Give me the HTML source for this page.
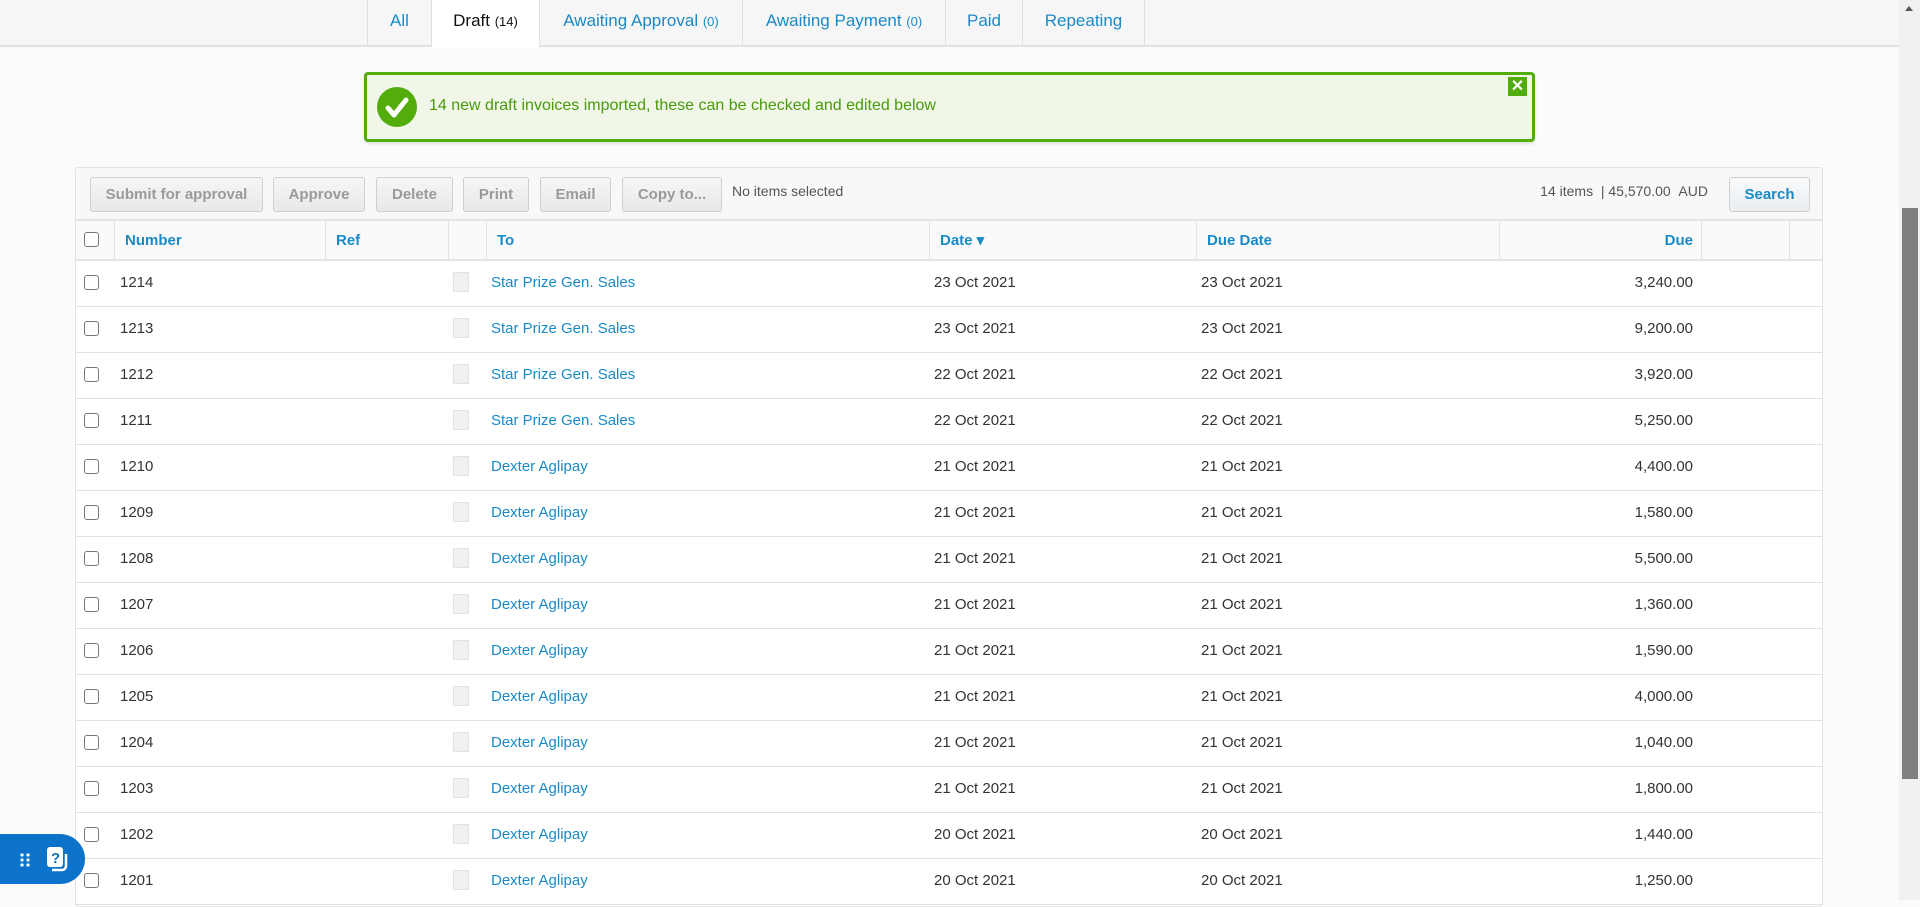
<!DOCTYPE html>
<html><head><meta charset="utf-8"><style>
*{box-sizing:border-box;margin:0;padding:0}
body{width:1920px;height:900px;overflow:hidden;background:#fbfbfb;font-family:"Liberation Sans",Arial,sans-serif;font-size:15px;color:#333;position:relative}
.top{position:absolute;left:0;top:0;width:1899px;height:47px;background:#f6f6f6;border-bottom:2px solid #e2e2e2}
.tab{position:absolute;top:0;height:46px;line-height:42px;text-align:center;color:#1a8ac7;font-size:17px;border-left:1px solid #e0e0e0}
.tab small{font-size:13px}
.tab.act{background:#fff;color:#111;height:47px}
.banner{position:absolute;left:364px;top:72px;width:1171px;height:70px;background:#f0f7e8;border:3px solid #52ad0a;border-radius:4px;box-shadow:0 2px 3px rgba(0,0,0,.1)}
.chk{position:absolute;left:10px;top:12px;width:40px;height:40px;border-radius:50%;background:#52ad0a}
.btxt{position:absolute;left:62px;top:22px;color:#4a9a0c;font-size:16px}
.x{position:absolute;right:5px;top:2px;width:19px;height:19px;background:#52ad0a;color:#fff;font-weight:bold;font-size:16px;line-height:19px;text-align:center}
.wrap{position:absolute;left:75px;top:167px;width:1748px;height:740px;background:#fff;border:1px solid #e2e2e2;border-radius:3px}
.tb{position:absolute;left:0;top:0;width:100%;height:53px;background:#f8f8f8;border-bottom:2px solid #e4e4e4}
.btn{position:absolute;top:9px;height:35px;line-height:33px;text-align:center;font-size:15px;font-weight:bold;color:#9a9a9a;background:linear-gradient(#f6f6f6,#e8e8e8);border:1px solid #cfcfcf;border-radius:3px}
.hdr{position:absolute;top:53px;left:0;width:100%;height:40px;background:#fafafa;border-bottom:2px solid #e4e4e4}
.hc{position:absolute;top:0;height:38px;line-height:40px;border-left:1px solid #e4e4e4;color:#1a8ac7;font-weight:bold;padding-left:10px}
.row{position:absolute;left:0;width:100%;height:46px;border-bottom:1px solid #e2e2e2;line-height:44px}
.row span{position:absolute;top:0}
.cb{position:absolute;width:15px;height:15px;border:1.5px solid #777;border-radius:3px;background:#fff}
.doc{position:absolute;top:11px;width:16px;height:20px;background:#f1f1f1;border:1px solid #e2e2e2}
a{color:#1a8ac7;text-decoration:none}
.sb{position:absolute;left:1899px;top:0;width:21px;height:900px;background:#f1f1f1}
.thumb{position:absolute;left:1902px;top:208px;width:16px;height:571px;background:#7f7f7f}
.help{position:absolute;left:0;top:834px;width:85px;height:50px;background:#0b73c9;border-radius:0 25px 25px 0}
</style></head><body>
<div class="top">
<div class="tab" style="left:367px;width:64px">All</div>
<div class="tab act" style="left:431px;width:108px">Draft <small>(14)</small></div>
<div class="tab" style="left:539px;width:203px">Awaiting Approval <small>(0)</small></div>
<div class="tab" style="left:742px;width:203px">Awaiting Payment <small>(0)</small></div>
<div class="tab" style="left:945px;width:77px">Paid</div>
<div class="tab" style="left:1022px;width:123px;border-right:1px solid #e0e0e0">Repeating</div>
</div>
<div class="banner"><div class="chk"><svg width="40" height="40" viewBox="0 0 40 40"><path d="M11 21l6 7 12-15" stroke="#fff" stroke-width="5" fill="none" stroke-linecap="round" stroke-linejoin="round"/></svg></div>
<div class="btxt">14 new draft invoices imported, these can be checked and edited below</div><div class="x">✕</div></div>
<div class="wrap">
<div class="tb">
<div class="btn" style="left:14px;width:173px">Submit for approval</div>
<div class="btn" style="left:197px;width:92px">Approve</div>
<div class="btn" style="left:300px;width:77px">Delete</div>
<div class="btn" style="left:387px;width:66px">Print</div>
<div class="btn" style="left:464px;width:71px">Email</div>
<div class="btn" style="left:546px;width:100px">Copy to...</div>
<div style="position:absolute;left:656px;top:15px;font-size:14px;color:#555">No items selected</div>
<div style="position:absolute;right:114px;top:15px;font-size:14px;color:#555">14 items &nbsp;| 45,570.00 &nbsp;AUD</div>
<div class="btn" style="left:1653px;width:81px;color:#1a8ac7;background:linear-gradient(#f9fafb,#e9eef2)">Search</div>
</div>
<div class="hdr">
<div class="cb" style="left:8px;top:11px"></div>
<div class="hc" style="left:38px;width:211px">Number</div>
<div class="hc" style="left:249px;width:123px">Ref</div>
<div class="hc" style="left:372px;width:38px"></div>
<div class="hc" style="left:410px;width:443px">To</div>
<div class="hc" style="left:853px;width:267px">Date ▾</div>
<div class="hc" style="left:1120px;width:303px">Due Date</div>
<div class="hc" style="left:1423px;width:202px;text-align:right;padding-right:8px">Due</div>
<div class="hc" style="left:1625px;width:88px"></div>
<div class="hc" style="left:1713px;width:35px"></div>
</div>
<div id="rows"></div>
</div>
<div class="sb"><div style="position:absolute;left:6px;top:6px;border:4px solid transparent;border-bottom:5px solid #555;border-top:0"></div></div>
<div class="thumb"></div>
<div class="help"><svg width="85" height="50"><g fill="#fff"><circle cx="22" cy="21" r="1.6"/><circle cx="28" cy="21" r="1.6"/><circle cx="22" cy="26" r="1.6"/><circle cx="28" cy="26" r="1.6"/><circle cx="22" cy="31" r="1.6"/><circle cx="28" cy="31" r="1.6"/></g><rect x="47" y="13" width="16" height="20" rx="3" fill="#fff"/><path d="M66 20v12a4 4 0 0 1-4 4h-10" stroke="#fff" stroke-width="2.5" fill="none"/><text x="51" y="29" font-family="Liberation Sans" font-weight="bold" font-size="15" fill="#0b73c9">?</text></svg></div>
<script>
var d=[["1214","Star Prize Gen. Sales","23 Oct 2021","23 Oct 2021","3,240.00"],["1213","Star Prize Gen. Sales","23 Oct 2021","23 Oct 2021","9,200.00"],["1212","Star Prize Gen. Sales","22 Oct 2021","22 Oct 2021","3,920.00"],["1211","Star Prize Gen. Sales","22 Oct 2021","22 Oct 2021","5,250.00"],["1210","Dexter Aglipay","21 Oct 2021","21 Oct 2021","4,400.00"],["1209","Dexter Aglipay","21 Oct 2021","21 Oct 2021","1,580.00"],["1208","Dexter Aglipay","21 Oct 2021","21 Oct 2021","5,500.00"],["1207","Dexter Aglipay","21 Oct 2021","21 Oct 2021","1,360.00"],["1206","Dexter Aglipay","21 Oct 2021","21 Oct 2021","1,590.00"],["1205","Dexter Aglipay","21 Oct 2021","21 Oct 2021","4,000.00"],["1204","Dexter Aglipay","21 Oct 2021","21 Oct 2021","1,040.00"],["1203","Dexter Aglipay","21 Oct 2021","21 Oct 2021","1,800.00"],["1202","Dexter Aglipay","20 Oct 2021","20 Oct 2021","1,440.00"],["1201","Dexter Aglipay","20 Oct 2021","20 Oct 2021","1,250.00"]];
var h="";d.forEach(function(r,i){h+='<div class="row" style="top:'+(93+i*46)+'px"><div class="cb" style="left:8px;top:14px"></div><span style="left:44px">'+r[0]+'</span><div class="doc" style="left:377px"></div><span style="left:415px"><a>'+r[1]+'</a></span><span style="left:858px">'+r[2]+'</span><span style="left:1125px">'+r[3]+'</span><span style="left:1423px;width:194px;text-align:right">'+r[4]+'</span></div>'});
document.getElementById("rows").innerHTML=h;
</script>
</body></html>
